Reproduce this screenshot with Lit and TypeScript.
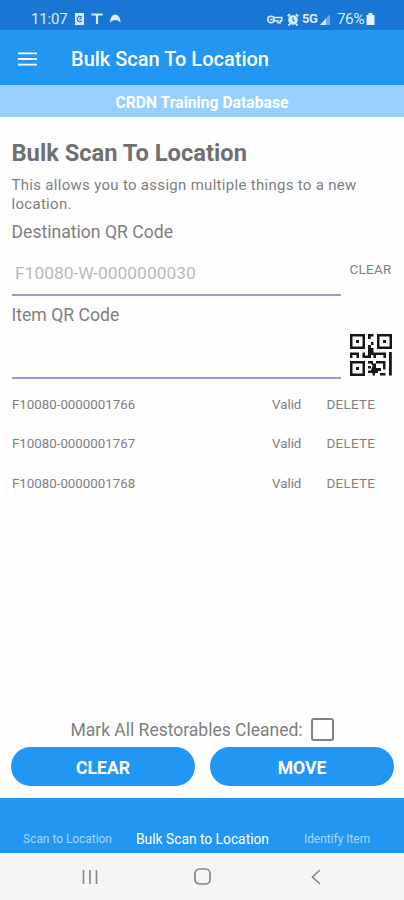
import { LitElement, html, css } from "lit";
import { customElement, state } from "lit/decorators.js";

@customElement("app-root")
export class AppRoot extends LitElement {
  @state() private items = ["F10080-0000001766", "F10080-0000001767", "F10080-0000001768"];

  static styles = css`
    :host {
      display: flex;
      flex-direction: column;
      width: 404px;
      height: 900px;
      background: #fefefe;
      color: #7e7e7e;
      font-family: Roboto, sans-serif;
      overflow: hidden;
      white-space: nowrap;
    }
    * { box-sizing: border-box; }
    svg { display: block; flex: none; }
    .status {
      height: 30px;
      background: #1976d2;
      color: #dcebfa;
      display: flex;
      align-items: center;
      padding: 8px 29px 0 31px;
      font-size: 15px;
      line-height: 22px;
    }
    .clock { width: 43px; letter-spacing: -0.15px; }
    .grow { flex: 1; }
    .net { font-size: 13px; font-weight: 700; letter-spacing: -0.5px; width: 18px; margin-left: 1px; }
    .pct { font-size: 15.5px; width: 29px; letter-spacing: -0.6px; margin-left: 7px; }
    .bar {
      height: 55px;
      background: #2196f3;
      color: #fff;
      display: flex;
      align-items: center;
      padding: 2px 0 0 18px;
    }
    .title { margin-left: 33px; font-size: 20px; font-weight: 500; }
    .banner {
      height: 32px;
      background: #99cffd;
      color: #fff;
      text-align: center;
      font-size: 15.7px;
      font-weight: 700;
      line-height: 35px;
    }
    .content { flex: 1; display: flex; flex-direction: column; padding: 0 12px; }
    h1 { margin: 21px 0 0 -0.5px; font-size: 23.7px; font-weight: 700; line-height: 30px; color: #707070; }
    .desc { margin: 8px 0 0 -0.5px; font-size: 15px; line-height: 18.5px; letter-spacing: 0.3px; }
    .label { font-size: 17.6px; line-height: 20px; margin: 9px 0 0 -0.5px; }
    .row { display: flex; }
    .field { width: 329px; height: 54px; border-bottom: 2px solid #969cd0; padding: 21px 3px 0; font-size: 17.4px; line-height: 20px; color: #b9b9b9; }
    .side { margin-left: 8.5px; font-size: 13.4px; letter-spacing: 0.3px; padding-top: 20px; line-height: 15px; }
    .code { padding-top: 9px; margin-left: 9px; }
    .list { margin-top: 6px; }
    .item { display: grid; grid-template-columns: 260px 54.5px 1fr; height: 39.3px; align-items: center; font-size: 13.3px; }
    .item span:last-child { font-size: 13.4px; letter-spacing: 0.3px; }
    .check { display: flex; justify-content: center; align-items: center; height: 24px; font-size: 17.5px; line-height: 23px; }
    .check span:first-child { padding-top: 2px; }
    .box { width: 23px; height: 23px; border: 2px solid #808080; border-radius: 3px; margin-left: 8px; }
    .buttons { display: flex; gap: 15px; margin: 6px -2px 12px -1px; }
    .btn { flex: 1; height: 39px; border-radius: 20px; background: #2196f3; color: #fff; text-align: center; font-weight: 700; font-size: 17.6px; line-height: 42px; }
    .tabs { height: 55px; background: #2196f3; display: grid; grid-template-columns: 135px 135px 134px; color: #a9d6fb; font-size: 11.9px; text-align: center; line-height: 16px; padding-top: 33px; }
    .active { color: #fff; font-size: 13.8px; }
    .nav { height: 47px; background: #f5f5f5; display: grid; grid-template-columns: 67px 45px 180px 48px; justify-items: center; align-items: center; }
  `;

  private qr() {
    return html`<svg width="42" height="42" viewBox="0 0 42 42" fill="#161616">
      <path fill-rule="evenodd" d="M0 0h15v15H0zM2.500 2.500v10h10v-10zM6 6h3v3H6zM27 0h15v15H27zM29.500 2.500v10h10v-10zM33 6h3v3h-3zM0 27h15v15H0zM2.500 29.500v10h10v-10zM6 33h3v3H6z" />
      <path d="M18 0h5.500v2.500h-2.800V5H18zM21 8h2.500v3H21v3h2.500v4.500H36V24h-2.600v-3H26v3h-2.600v-3H21V24h-8.500v-5.500H15v3h3V11h3zM0 18.500h9V24H6.500v-3h-4v3H0zM39 18h2.800v23.500H39zM26 27h9.500v8.500H33v-6h-7zM18 27h5v2.500h3V32h-3l-2-2.500h-3zM18 32h3v2.500h-3zM23 31h3v3h5v3h-3v2h-3v2.500h-2.500V39H18v-2.500h3l1-3zM30 39h5.500v2.500H30z" />
    </svg>`;
  }

  render() {
    return html`
      <div class="status">
        <span class="clock">11:07</span>
        <svg width="48" height="14" viewBox="0 0 48 14" fill="none" stroke="#dcebfa">
          <path d="M1 1h9v12H1z" fill="#dcebfa" stroke="none" />
          <path d="M7.700 5.200a2.600 2.600 0 1 0 .3 3.300M5.500 7.500l2-2" stroke="#1976d2" stroke-width="1.200" />
          <path d="M17.500 2.500h11M23 3v9" stroke-width="2.200" />
          <path d="M36 11c0-5 2.200-8.500 5.300-8.500s5.300 3.500 5.300 8.500c-2.500-4-8-4-10.600 0z" fill="#dcebfa" stroke="none" />
        </svg>
        <span class="grow"></span>
        <svg width="34" height="13" viewBox="0 0 34 13" fill="none" stroke="#dcebfa">
          <circle cx="4" cy="6.500" r="3.200" stroke-width="1.600" />
          <path d="M3 6.500h3M6.500 4.500h8.300v3.300h-1.500v2h-2.500v-2H7" stroke-width="1.400" />
          <circle cx="26" cy="7" r="4.800" fill="#dcebfa" stroke="none" />
          <path d="M20.700 3.200l2.500-2M31.300 3.200l-2.500-2M23 11l-1.500 1.500M29 11l1.500 1.500" stroke-width="2" />
          <path d="M26 4.300V7.200l2 1" stroke="#1976d2" stroke-width="1.100" />
        </svg>
        <span class="net">5G</span>
        <svg width="10" height="11" viewBox="0 0 10 11"><path d="M0 11L10 0v11z" fill="#6da9e4" /><path d="M0 11l6-6.600V11z" fill="#dcebfa" /></svg>
        <span class="pct">76%</span>
        <svg width="9" height="12" viewBox="0 0 9 12" fill="#e4f0fc"><path d="M2.500 0h4v2h2v10h-8V2h2z" /></svg>
      </div>
      <div class="bar">
        <svg width="20" height="14" viewBox="0 0 20 14" stroke="#fff" stroke-width="1.800"><path d="M0 1.300h19M0 7h19M0 12.700h19" /></svg>
        <span class="title">Bulk Scan To Location</span>
      </div>
      <div class="banner">CRDN Training Database</div>
      <div class="content">
        <h1>Bulk Scan To Location</h1>
        <p class="desc">This allows you to assign multiple things to a new<br />location.</p>
        <div class="label">Destination QR Code</div>
        <div class="row"><div class="field">F10080-W-0000000030</div><span class="side">CLEAR</span></div>
        <div class="label">Item QR Code</div>
        <div class="row"><div class="field"></div><div class="code">${this.qr()}</div></div>
        <div class="list">
          ${this.items.map((id) => html`<div class="item"><span>${id}</span><span>Valid</span><span>DELETE</span></div>`)}
        </div>
        <div class="grow"></div>
        <div class="check"><span>Mark All Restorables Cleaned:</span><span class="box"></span></div>
        <div class="buttons"><div class="btn">CLEAR</div><div class="btn">MOVE</div></div>
      </div>
      <div class="tabs"><span>Scan to Location</span><span class="active">Bulk Scan to Location</span><span>Identify Item</span></div>
      <div class="nav">
        <span></span>
        <svg width="16" height="16" viewBox="0 0 16 16" stroke="#868686" stroke-width="1.600"><path d="M1.500 1v14M8 1v14M14.500 1v14" /></svg>
        <svg width="17" height="17" viewBox="0 0 17 17" fill="none" stroke="#868686" stroke-width="1.700"><rect x="1" y="1" width="15" height="15" rx="4.500" /></svg>
        <svg width="10" height="16" viewBox="0 0 10 16" fill="none" stroke="#868686" stroke-width="1.700"><path d="M9 1L1.500 8 9 15" /></svg>
      </div>
    `;
  }
}
